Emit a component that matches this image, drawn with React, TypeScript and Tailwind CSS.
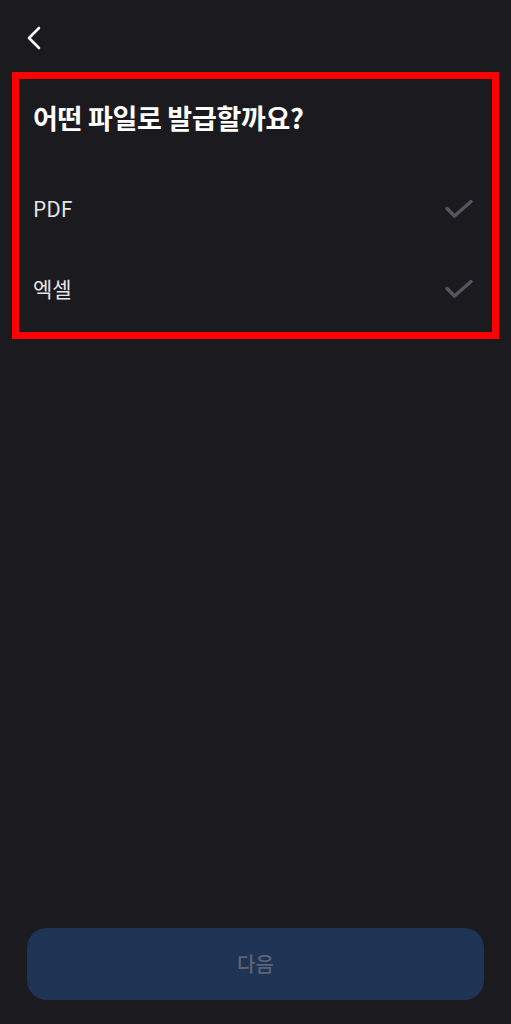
import React from "react";

const options = ["PDF", "엑셀"];

const CheckIcon = () => (
  <svg width="28" height="18" viewBox="0 0 28 18" fill="none">
    <path
      d="M2 8.5 L9.5 16 L26 1.5"
      stroke="#55565b"
      strokeWidth="3.4"
      strokeLinecap="round"
      strokeLinejoin="round"
    />
  </svg>
);

const App = () => {
  return (
    <div
      className="w-[511px] h-[1024px] bg-[#1b1b1f] flex flex-col"
      style={{ fontFamily: '"Noto Sans CJK KR", "Noto Sans", sans-serif' }}
    >
      {/* Header */}
      <div className="h-[72px] flex items-center pl-[26px] pt-[3px]">
        <svg width="16" height="24" viewBox="0 0 16 24" fill="none">
          <path
            d="M13 2 L3 12 L13 22"
            stroke="#ffffff"
            strokeWidth="2.6"
            strokeLinecap="round"
            strokeLinejoin="round"
          />
        </svg>
      </div>

      {/* Highlighted section */}
      <div className="mx-[12px] border-[7px] border-[#ff0000] pt-[23px] pb-[3px]">
        <h1 className="pl-[14px] text-[27px] leading-8 font-bold text-white tracking-[-0.3px]">
          어떤 파일로 발급할까요?
        </h1>
        <div className="mt-[35px] flex flex-col">
          {options.map((item) => (
            <div
              key={item}
              className="h-20 flex items-center justify-between pl-[14px] pr-[19px]"
            >
              <span className="text-[21px] text-[#e6e6e8]">{item}</span>
              <CheckIcon />
            </div>
          ))}
        </div>
      </div>

      {/* Bottom button */}
      <div className="mt-auto px-[27px] pb-[24px]">
        <button className="w-full h-[72px] rounded-[20px] bg-[#1f3454] text-[20px] font-medium text-[#5b6474]">
          다음
        </button>
      </div>
    </div>
  );
};

export default App;
